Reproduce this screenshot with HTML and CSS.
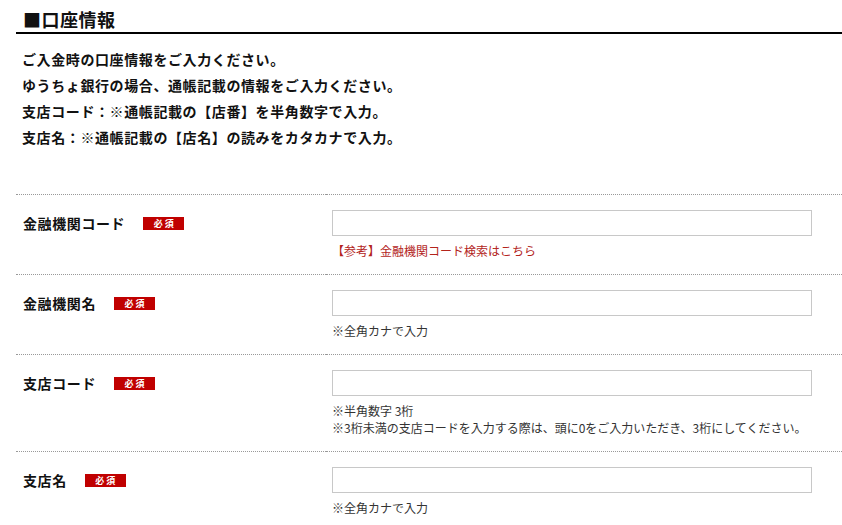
FILE: index.html
```html
<!DOCTYPE html>
<html lang="ja">
    <head>
        <meta charset="UTF-8" />
        <meta name="viewport" content="width=device-width, initial-scale=1.0" />
        <title>口座情報</title>
        <link rel="stylesheet" href="styles.css">
    </head>
    <body>
        <div class="wrap">
            <!-- Section title -->
            <h2 class="section-title">■口座情報</h2>

            <div class="lead">
                <p>ご入金時の口座情報をご入力ください。</p>
                <p>ゆうちょ銀行の場合、通帳記載の情報をご入力ください。</p>
                <p>支店コード：※通帳記載の【店番】を半角数字で入力。</p>
                <p>支店名：※通帳記載の【店名】の読みをカタカナで入力。</p>
            </div>

            <!-- Form rows -->
            <div class="form-table">
                <div class="row">
                    <div class="label">金融機関コード<span class="req">必 須</span></div>
                    <div class="field">
                        <input type="text" class="text-input">
                        <p class="note note-link">【参考】金融機関コード検索はこちら</p>
                    </div>
                </div>
                <div class="row">
                    <div class="label">金融機関名<span class="req">必 須</span></div>
                    <div class="field">
                        <input type="text" class="text-input">
                        <p class="note">※全角カナで入力</p>
                    </div>
                </div>
                <div class="row">
                    <div class="label">支店コード<span class="req">必 須</span></div>
                    <div class="field">
                        <input type="text" class="text-input">
                        <p class="note">※半角数字 3桁</p>
                        <p class="note">※3桁未満の支店コードを入力する際は、頭に0をご入力いただき、3桁にしてください。</p>
                    </div>
                </div>
                <div class="row">
                    <div class="label">支店名<span class="req">必 須</span></div>
                    <div class="field">
                        <input type="text" class="text-input">
                        <p class="note">※全角カナで入力</p>
                    </div>
                </div>
            </div>
        </div>
    </body>
</html>
```

FILE: styles.css
```css
body {
    font-family: "Noto Sans CJK JP", "Noto Sans", sans-serif;
    margin: 0;
    padding: 0;
    background-color: #fff;
    color: #111;
}

.wrap {
    margin-left: 16px;
}

.section-title {
    margin: 0;
    padding: 6px 0 0 7px;
    font-size: 18px;
    line-height: 26px;
    font-weight: bold;
    letter-spacing: 0.5px;
    border-bottom: 2px solid #000;
}

.lead {
    margin: 12px 0 0 6px;
    font-size: 14px;
    font-weight: bold;
    line-height: 26px;
    letter-spacing: 0.6px;
}

.lead p {
    margin: 0;
}

.form-table {
    margin-top: 44px;
}

.row {
    display: grid;
    grid-template-columns: 310px 1fr;
}

.label,
.field {
    border-top: 1px dotted #999;
}

.label {
    display: flex;
    align-items: center;
    align-self: stretch;
    height: 26px;
    padding: 15px 0 0 7px;
    font-size: 14px;
    font-weight: bold;
    letter-spacing: 0.6px;
    box-sizing: content-box;
}

.req {
    display: inline-block;
    margin-left: 18px;
    width: 41px;
    height: 13px;
    line-height: 13px;
    background-color: #c00000;
    color: #fff;
    font-size: 9px;
    font-weight: bold;
    letter-spacing: 0;
    text-align: center;
}

.field {
    padding: 15px 6px 15px 6px;
}

.text-input {
    display: block;
    width: 480px;
    height: 26px;
    margin: 0 0 6px 0;
    padding: 0 6px;
    border: 1px solid #c8c8c8;
    box-sizing: border-box;
    font-size: 14px;
}

.note {
    margin: 0;
    font-size: 12px;
    line-height: 17px;
    color: #333;
}

.note-link {
    color: #b3241c;
}
```
